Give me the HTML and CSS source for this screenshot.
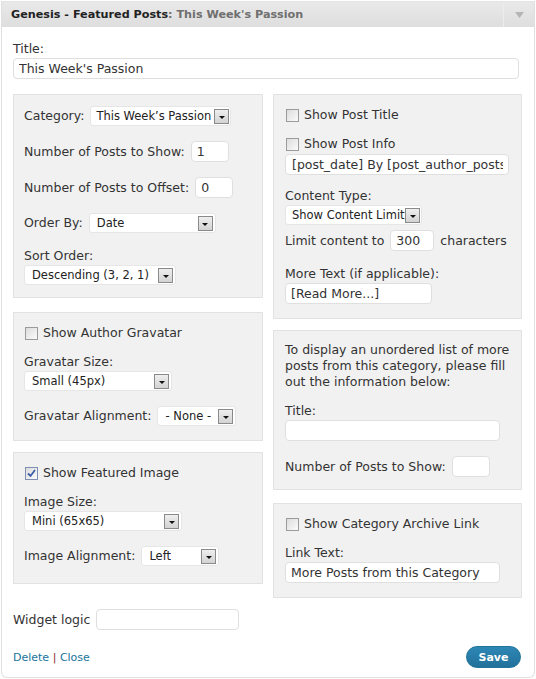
FILE: index.html
```html
<!DOCTYPE html>
<html lang="en">
<head>
    <meta charset="UTF-8">
    <title>Genesis - Featured Posts</title>
    <link rel="stylesheet" href="styles.css">
</head>
<body>

<div class="widget">
    <div class="widget-top">
        <h4>Genesis - Featured Posts<span class="in-title">: This Week's Passion</span></h4>
        <div class="toggle">
            <svg width="9" height="6" viewBox="0 0 9 6"><path d="M0 0h9L4.5 6z" fill="#b5b5b5"/></svg>
        </div>
    </div>

    <div class="widget-inside">
        <div class="lbl">Title:</div>
        <input class="field w-title" type="text" value="This Week's Passion">

        <div class="cols">
            <!-- left column -->
            <div class="col">
                <div class="box">
                    <div class="grp row">
                        <span>Category:</span>
                        <div class="select w-cat"><span class="val">This Week’s Passion</span><i class="arrow"></i></div>
                    </div>
                    <div class="grp row">
                        <span>Number of Posts to Show:</span>
                        <input class="field w-num" type="text" value="1">
                    </div>
                    <div class="grp row">
                        <span>Number of Posts to Offset:</span>
                        <input class="field w-num" type="text" value="0">
                    </div>
                    <div class="grp row">
                        <span>Order By:</span>
                        <div class="select w-order"><span class="val">Date</span><i class="arrow"></i></div>
                    </div>
                    <div class="grp">
                        <div class="lbl">Sort Order:</div>
                        <div class="select w-sort"><span class="val">Descending (3, 2, 1)</span><i class="arrow"></i></div>
                    </div>
                </div>

                <div class="box sep-14 tall">
                    <div class="grp check-row"><span class="check"></span>Show Author Gravatar</div>
                    <div class="grp">
                        <div class="lbl">Gravatar Size:</div>
                        <div class="select w-gsize"><span class="val">Small (45px)</span><i class="arrow"></i></div>
                    </div>
                    <div class="grp row">
                        <span>Gravatar Alignment:</span>
                        <div class="select w-galign"><span class="val">- None -</span><i class="arrow"></i></div>
                    </div>
                </div>

                <div class="box sep-11 taller">
                    <div class="grp check-row">
                        <span class="check on"><svg width="9" height="9" viewBox="0 0 9 9"><path d="M1 4.5l2.5 2.5L8 1" fill="none" stroke="#3c5ea8" stroke-width="1.8"/></svg></span>Show Featured Image
                    </div>
                    <div class="grp">
                        <div class="lbl">Image Size:</div>
                        <div class="select w-isize"><span class="val">Mini (65x65)</span><i class="arrow"></i></div>
                    </div>
                    <div class="grp row">
                        <span>Image Alignment:</span>
                        <div class="select w-ialign"><span class="val">Left</span><i class="arrow"></i></div>
                    </div>
                </div>
            </div>

            <!-- right column -->
            <div class="col">
                <div class="box tall">
                    <div class="grp check-row"><span class="check"></span>Show Post Title</div>
                    <div class="grp">
                        <div class="check-row"><span class="check"></span>Show Post Info</div>
                        <input class="field w-info gap2" type="text" value="[post_date] By [post_author_posts_link] [post_comments]">
                    </div>
                    <div class="grp mid">
                        <div class="lbl">Content Type:</div>
                        <div class="select w-ctype"><span class="val">Show Content Limit</span><i class="arrow"></i></div>
                    </div>
                    <div class="grp tight row">
                        <span>Limit content to</span>
                        <input class="field w-limit" type="text" value="300">
                        <span>characters</span>
                    </div>
                    <div class="grp">
                        <div class="lbl">More Text (if applicable):</div>
                        <input class="field w-more" type="text" value="[Read More...]">
                    </div>
                </div>

                <div class="box sep-11">
                    <p class="grp note">To display an unordered list of more posts from this category, please fill out the information below:</p>
                    <div class="grp mid">
                        <div class="lbl">Title:</div>
                        <input class="field w-extra" type="text" value="">
                    </div>
                    <div class="grp row">
                        <span>Number of Posts to Show:</span>
                        <input class="field w-num" type="text" value="">
                    </div>
                </div>

                <div class="box sep-13 tall">
                    <div class="grp check-row"><span class="check"></span>Show Category Archive Link</div>
                    <div class="grp">
                        <div class="lbl">Link Text:</div>
                        <input class="field w-extra" type="text" value="More Posts from this Category">
                    </div>
                </div>
            </div>
        </div>

        <div class="logic row">
            <span>Widget logic</span>
            <input class="field w-logic" type="text" value="">
        </div>

        <div class="controls">
            <div class="links"><a href="#">Delete</a> <span class="sep">|</span> <a href="#">Close</a></div>
            <button class="save">Save</button>
        </div>
    </div>
</div>

</body>
</html>
```

FILE: styles.css
```css
body {
    margin: 0;
    background: #fff;
    font-family: "DejaVu Sans", Verdana, sans-serif;
    font-size: 12.5px;
    color: #333;
}
.widget {
    margin: 1px 1px 0 1px;
    border: 1px solid #dfdfdf;
    border-top: none;
    border-radius: 0 0 6px 6px;
}
.widget-top {
    display: flex;
    align-items: center;
    justify-content: space-between;
    height: 25px;
    margin-top: 1px;
    background: linear-gradient(#e9e9e9, #dedede);
    border-top: 1px solid #e4e4e4;
}
.widget-top h4 {
    margin: 0 0 0 9px;
    font-size: 11.2px;
    font-weight: bold;
    color: #222;
}
.in-title {
    color: #6f6f6f;
}
.toggle {
    width: 30px;
    height: 25px;
    display: flex;
    align-items: center;
    justify-content: center;
    border-left: 1px solid #ececec;
}
.widget-inside {
    padding: 14px 13px 9px 11px;
}
.lbl {
    line-height: 16px;
}
.field {
    box-sizing: border-box;
    height: 21px;
    margin-top: 1px;
    padding: 0 5px;
    border: 1px solid #dfdfdf;
    border-radius: 4px;
    background: #fff;
    font-family: inherit;
    font-size: 12.5px;
    color: #333;
}
.row .field {
    margin-top: 0;
}
.w-title { width: 506px; }
.w-num { width: 38px; }
.w-info { width: 224px; padding-left: 6px; }
.w-limit { width: 44px; }
.w-more { width: 147px; }
.w-extra { width: 215px; }
.w-logic { width: 143px; }
.gap2 { margin-top: 2px; }

.cols {
    display: grid;
    grid-template-columns: 250px 249px;
    gap: 10px;
    margin-top: 15px;
    align-items: start;
}
.col {
    display: flex;
    flex-direction: column;
}
.box {
    background: #f1f1f1;
    border: 1px solid #e2e2e2;
    padding: 11px 10px 12px 10px;
}
.box.tall {
    padding-bottom: 14px;
}
.box.taller {
    padding-bottom: 17px;
}
.sep-11 { margin-top: 11px; }
.sep-13 { margin-top: 13px; }
.sep-14 { margin-top: 14px; }
.col + .col .box {
    padding-left: 11px;
}
.grp + .grp {
    margin-top: 15px;
}
.check-row + .grp,
.grp.mid {
    margin-top: 13px;
}
.grp.tight {
    margin-top: 5px;
}
.row {
    display: flex;
    align-items: center;
    gap: 6px;
    line-height: 16px;
}
.check-row {
    display: flex;
    align-items: center;
    gap: 5px;
    line-height: 16px;
}
.box > .check-row:first-child {
    margin-top: 1px;
}
.check {
    box-sizing: border-box;
    width: 13px;
    height: 13px;
    margin-left: 1px;
    border: 1px solid #9b9b9b;
    background: linear-gradient(135deg, #dcdcdc, #fbfbfb);
    display: flex;
    align-items: center;
    justify-content: center;
}
.check.on {
    border-color: #7d8fb5;
}
.note {
    margin: 0;
    line-height: 16px;
}

.select {
    box-sizing: border-box;
    height: 20px;
    margin-top: 1px;
    display: flex;
    align-items: center;
    justify-content: space-between;
    padding-left: 7px;
    background: #fff;
    border: 1px solid #e6e6e6;
    border-radius: 3px;
    font-size: 11.5px;
    color: #222;
}
.row .select {
    margin-top: 0;
}
.select .val {
    white-space: nowrap;
    overflow: hidden;
}
.arrow {
    flex: none;
    box-sizing: border-box;
    width: 15px;
    height: 15px;
    margin-right: 2px;
    border: 1px solid #8a8a8a;
    background: linear-gradient(#eeeeee, #d3d3d3);
    display: flex;
    align-items: center;
    justify-content: center;
}
.arrow::after {
    content: "";
    border-left: 3px solid transparent;
    border-right: 3px solid transparent;
    border-top: 3px solid #111;
    margin-top: 2px;
}
.w-cat { width: 141px; padding-left: 5px; }
.w-order { width: 127px; }
.w-sort { width: 152px; }
.w-gsize { width: 148px; }
.w-galign { width: 79px; }
.w-isize { width: 158px; }
.w-ialign { width: 78px; }
.w-ctype { width: 137px; padding-left: 6px; }
.w-cat .arrow,
.w-ctype .arrow {
    margin-right: 1px;
}

.logic {
    margin-top: 11px;
    gap: 6px;
}
.controls {
    display: flex;
    justify-content: space-between;
    align-items: center;
    margin-top: 16px;
}
.links {
    font-size: 11px;
    color: #8a2b2b;
}
.links a {
    color: #21759b;
    text-decoration: none;
}
.save {
    width: 55px;
    height: 22px;
    border: 1px solid #21759b;
    border-radius: 11px;
    background: linear-gradient(#2e87b5, #21719a);
    color: #fff;
    font-family: inherit;
    font-size: 11px;
    font-weight: bold;
    padding: 0;
    cursor: pointer;
}
```
